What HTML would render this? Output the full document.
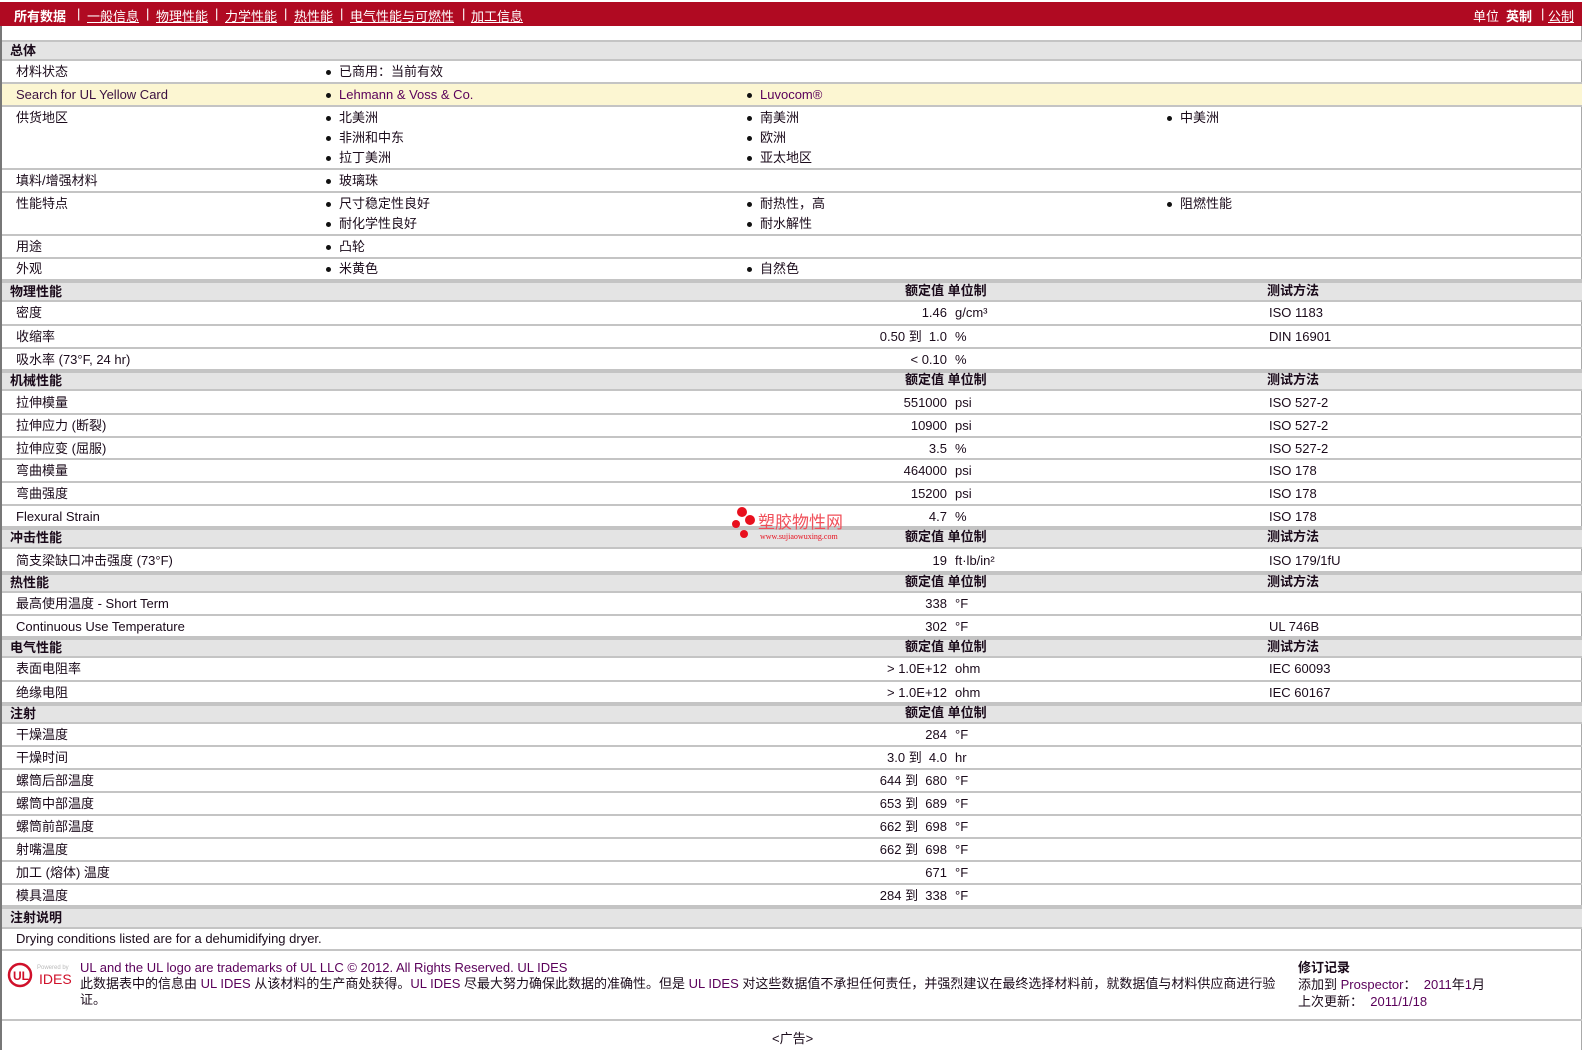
<!DOCTYPE html>
<html><head><meta charset="utf-8"><style>
*{margin:0;padding:0;box-sizing:border-box}
body{width:1586px;height:1050px;background:#fff;font-family:"Liberation Sans","Noto Sans CJK SC",sans-serif;font-size:13px;color:#1a0a1a;position:relative;overflow:hidden}
.bar{position:absolute;left:0;top:2px;width:1582px;height:24px;background:#b00a22;color:#fff;font-size:13px}
.bar span{position:absolute;top:4px}
.bar u{text-decoration:underline}
.frame{position:absolute;left:0;top:26px;width:1582px;height:1024px;border-left:2px solid #777;border-right:1px solid #aaa}
.r{position:absolute;left:2px;width:1580px;border-bottom:2px solid #c4c4c4}
.s{background:#e4e4e4;font-weight:bold;border-top:2px solid #c4c4c4}
.y{background:#fcf6d2}
.c{position:absolute;white-space:nowrap;line-height:20px}
.b::before{content:"";position:absolute;left:-13px;top:8px;width:5px;height:5px;border-radius:50%;background:#111}
.v{position:absolute;right:635px;text-align:right;white-space:nowrap;line-height:20px}
.pu{color:#5a005a}
</style></head><body>
<div class="bar">
<span style="left:14px;font-weight:bold">所有数据</span>
<span style="left:77px">|</span><span style="left:87px"><u>一般信息</u></span>
<span style="left:146px">|</span><span style="left:156px"><u>物理性能</u></span>
<span style="left:215px">|</span><span style="left:225px"><u>力学性能</u></span>
<span style="left:284px">|</span><span style="left:294px"><u>热性能</u></span>
<span style="left:340px">|</span><span style="left:350px"><u>电气性能与可燃性</u></span>
<span style="left:462px">|</span><span style="left:471px"><u>加工信息</u></span>
<span style="left:1473px">单位</span><span style="left:1506px;font-weight:bold">英制</span><span style="left:1541px">|</span><span style="left:1548px"><u>公制</u></span>
</div>
<div class="frame"></div>

<div class="r s" style="top:40px;height:21px"><div class="c" style="left:8px;top:-1px">总体</div></div>
<div class="r" style="top:61px;height:23px"><div class="c" style="left:14px;top:1px">材料状态</div><div class="c b" style="left:337px;top:1px">已商用：当前有效</div></div>
<div class="r y" style="top:84px;height:23px"><div class="c" style="left:14px;top:1px;color:#3a1040">Search for UL Yellow Card</div><div class="c b pu" style="left:337px;top:1px">Lehmann &amp; Voss &amp; Co.</div><div class="c b pu" style="left:758px;top:1px">Luvocom®</div></div>
<div class="r" style="top:107px;height:63px"><div class="c" style="left:14px;top:1px">供货地区</div>
<div class="c b" style="left:337px;top:1px">北美洲</div><div class="c b" style="left:337px;top:21px">非洲和中东</div><div class="c b" style="left:337px;top:41px">拉丁美洲</div>
<div class="c b" style="left:758px;top:1px">南美洲</div><div class="c b" style="left:758px;top:21px">欧洲</div><div class="c b" style="left:758px;top:41px">亚太地区</div>
<div class="c b" style="left:1178px;top:1px">中美洲</div></div>
<div class="r" style="top:170px;height:23px"><div class="c" style="left:14px;top:1px">填料/增强材料</div><div class="c b" style="left:337px;top:1px">玻璃珠</div></div>
<div class="r" style="top:193px;height:43px"><div class="c" style="left:14px;top:1px">性能特点</div>
<div class="c b" style="left:337px;top:1px">尺寸稳定性良好</div><div class="c b" style="left:337px;top:21px">耐化学性良好</div>
<div class="c b" style="left:758px;top:1px">耐热性，高</div><div class="c b" style="left:758px;top:21px">耐水解性</div>
<div class="c b" style="left:1178px;top:1px">阻燃性能</div></div>
<div class="r" style="top:236px;height:23px"><div class="c" style="left:14px;top:1px">用途</div><div class="c b" style="left:337px;top:1px">凸轮</div></div>
<div class="r" style="top:259px;height:22px"><div class="c" style="left:14px;top:0px">外观</div><div class="c b" style="left:337px;top:0px">米黄色</div><div class="c b" style="left:758px;top:0px">自然色</div></div>

<div class="r s" style="top:281px;height:21px"><div class="c" style="left:903px;top:-2px">额定值 单位制</div><div class="c" style="left:8px;top:-1px">物理性能</div><div class="c" style="left:1265px;top:-2px">测试方法</div></div>
<div class="r" style="top:302px;height:24px"><div class="c" style="left:14px;top:1px">密度</div><div class="v" style="top:1px">1.46</div><div class="c" style="left:953px;top:1px">g/cm³</div><div class="c" style="left:1267px;top:1px">ISO 1183</div></div>
<div class="r" style="top:326px;height:23px"><div class="c" style="left:14px;top:1px">收缩率</div><div class="v" style="top:1px">0.50 到&nbsp; 1.0</div><div class="c" style="left:953px;top:1px">%</div><div class="c" style="left:1267px;top:1px">DIN 16901</div></div>
<div class="r" style="top:349px;height:22px"><div class="c" style="left:14px;top:1px">吸水率 (73°F, 24 hr)</div><div class="v" style="top:1px">&lt; 0.10</div><div class="c" style="left:953px;top:1px">%</div></div>

<div class="r s" style="top:371px;height:20px"><div class="c" style="left:8px;top:-2px">机械性能</div><div class="c" style="left:903px;top:-3px">额定值 单位制</div><div class="c" style="left:1265px;top:-3px">测试方法</div></div>
<div class="r" style="top:391px;height:24px"><div class="c" style="left:14px;top:2px">拉伸模量</div><div class="v" style="top:2px">551000</div><div class="c" style="left:953px;top:2px">psi</div><div class="c" style="left:1267px;top:2px">ISO 527-2</div></div>
<div class="r" style="top:415px;height:23px"><div class="c" style="left:14px;top:1px">拉伸应力 (断裂)</div><div class="v" style="top:1px">10900</div><div class="c" style="left:953px;top:1px">psi</div><div class="c" style="left:1267px;top:1px">ISO 527-2</div></div>
<div class="r" style="top:438px;height:22px"><div class="c" style="left:14px;top:1px">拉伸应变 (屈服)</div><div class="v" style="top:1px">3.5</div><div class="c" style="left:953px;top:1px">%</div><div class="c" style="left:1267px;top:1px">ISO 527-2</div></div>
<div class="r" style="top:460px;height:23px"><div class="c" style="left:14px;top:1px">弯曲模量</div><div class="v" style="top:1px">464000</div><div class="c" style="left:953px;top:1px">psi</div><div class="c" style="left:1267px;top:1px">ISO 178</div></div>
<div class="r" style="top:483px;height:23px"><div class="c" style="left:14px;top:1px">弯曲强度</div><div class="v" style="top:1px">15200</div><div class="c" style="left:953px;top:1px">psi</div><div class="c" style="left:1267px;top:1px">ISO 178</div></div>
<div class="r" style="top:506px;height:22px"><div class="c" style="left:14px;top:1px">Flexural Strain</div><div class="v" style="top:1px">4.7</div><div class="c" style="left:953px;top:1px">%</div><div class="c" style="left:1267px;top:1px">ISO 178</div></div>

<div class="r s" style="top:528px;height:21px"><div class="c" style="left:8px;top:-2px">冲击性能</div><div class="c" style="left:903px;top:-3px">额定值 单位制</div><div class="c" style="left:1265px;top:-3px">测试方法</div></div>
<div class="r" style="top:549px;height:24px"><div class="c" style="left:14px;top:2px">简支梁缺口冲击强度 (73°F)</div><div class="v" style="top:2px">19</div><div class="c" style="left:953px;top:2px">ft·lb/in²</div><div class="c" style="left:1267px;top:2px">ISO 179/1fU</div></div>

<div class="r s" style="top:573px;height:20px"><div class="c" style="left:8px;top:-2px">热性能</div><div class="c" style="left:903px;top:-3px">额定值 单位制</div><div class="c" style="left:1265px;top:-3px">测试方法</div></div>
<div class="r" style="top:593px;height:23px"><div class="c" style="left:14px;top:1px">最高使用温度 - Short Term</div><div class="v" style="top:1px">338</div><div class="c" style="left:953px;top:1px">°F</div></div>
<div class="r" style="top:616px;height:22px"><div class="c" style="left:14px;top:1px">Continuous Use Temperature</div><div class="v" style="top:1px">302</div><div class="c" style="left:953px;top:1px">°F</div><div class="c" style="left:1267px;top:1px">UL 746B</div></div>

<div class="r s" style="top:638px;height:20px"><div class="c" style="left:8px;top:-2px">电气性能</div><div class="c" style="left:903px;top:-3px">额定值 单位制</div><div class="c" style="left:1265px;top:-3px">测试方法</div></div>
<div class="r" style="top:658px;height:24px"><div class="c" style="left:14px;top:1px">表面电阻率</div><div class="v" style="top:1px">&gt; 1.0E+12</div><div class="c" style="left:953px;top:1px">ohm</div><div class="c" style="left:1267px;top:1px">IEC 60093</div></div>
<div class="r" style="top:682px;height:22px"><div class="c" style="left:14px;top:1px">绝缘电阻</div><div class="v" style="top:1px">&gt; 1.0E+12</div><div class="c" style="left:953px;top:1px">ohm</div><div class="c" style="left:1267px;top:1px">IEC 60167</div></div>

<div class="r s" style="top:704px;height:20px"><div class="c" style="left:8px;top:-2px">注射</div><div class="c" style="left:903px;top:-3px">额定值 单位制</div></div>
<div class="r" style="top:724px;height:23px"><div class="c" style="left:14px;top:1px">干燥温度</div><div class="v" style="top:1px">284</div><div class="c" style="left:953px;top:1px">°F</div></div>
<div class="r" style="top:747px;height:23px"><div class="c" style="left:14px;top:1px">干燥时间</div><div class="v" style="top:1px">3.0 到&nbsp; 4.0</div><div class="c" style="left:953px;top:1px">hr</div></div>
<div class="r" style="top:770px;height:23px"><div class="c" style="left:14px;top:1px">螺筒后部温度</div><div class="v" style="top:1px">644 到&nbsp; 680</div><div class="c" style="left:953px;top:1px">°F</div></div>
<div class="r" style="top:793px;height:23px"><div class="c" style="left:14px;top:1px">螺筒中部温度</div><div class="v" style="top:1px">653 到&nbsp; 689</div><div class="c" style="left:953px;top:1px">°F</div></div>
<div class="r" style="top:816px;height:23px"><div class="c" style="left:14px;top:1px">螺筒前部温度</div><div class="v" style="top:1px">662 到&nbsp; 698</div><div class="c" style="left:953px;top:1px">°F</div></div>
<div class="r" style="top:839px;height:23px"><div class="c" style="left:14px;top:1px">射嘴温度</div><div class="v" style="top:1px">662 到&nbsp; 698</div><div class="c" style="left:953px;top:1px">°F</div></div>
<div class="r" style="top:862px;height:23px"><div class="c" style="left:14px;top:1px">加工 (熔体) 温度</div><div class="v" style="top:1px">671</div><div class="c" style="left:953px;top:1px">°F</div></div>
<div class="r" style="top:885px;height:22px"><div class="c" style="left:14px;top:1px">模具温度</div><div class="v" style="top:1px">284 到&nbsp; 338</div><div class="c" style="left:953px;top:1px">°F</div></div>

<div class="r s" style="top:907px;height:22px"><div class="c" style="left:8px;top:-1px">注射说明</div></div>
<div class="r" style="top:929px;height:22px"><div class="c" style="left:14px;top:0px">Drying conditions listed are for a dehumidifying dryer.</div></div>

<div class="r" style="top:951px;height:70px">
<svg style="position:absolute;left:4px;top:10px" width="68" height="30">
<circle cx="14" cy="14" r="11" fill="none" stroke="#d0102a" stroke-width="2.5"/>
<text x="7" y="19" font-family="Liberation Sans" font-weight="bold" font-size="12" fill="#d0102a">UL</text>
<text x="31" y="8" font-family="Liberation Sans" font-size="6" fill="#bbb">Powered by</text>
<text x="33" y="23" font-family="Liberation Sans" font-size="14" fill="#d0102a">IDES</text>
</svg>
<div class="c" style="left:78px;top:9px;line-height:16px"><span class="pu">UL and the UL logo are trademarks of UL LLC © 2012. All Rights Reserved. UL IDES</span><br>此数据表中的信息由 <span class="pu">UL IDES</span> 从该材料的生产商处获得。<span class="pu">UL IDES</span> 尽最大努力确保此数据的准确性。但是 <span class="pu">UL IDES</span> 对这些数据值不承担任何责任，并强烈建议在最终选择材料前，就数据值与材料供应商进行验<br>证。</div>
<div class="c" style="left:1296px;top:8px;line-height:17px"><b>修订记录</b><br>添加到 <span class="pu">Prospector</span>：&nbsp; <span class="pu">2011</span>年<span class="pu">1</span>月<br>上次更新：&nbsp; <span class="pu">2011/1/18</span></div>
</div>
<div class="c" style="left:772px;top:1029px">&lt;广告&gt;</div>

<svg style="position:absolute;left:728px;top:506px" width="140" height="36">
<circle cx="14" cy="6" r="5" fill="#e8101e"/><circle cx="22" cy="14" r="5" fill="#e8101e"/><circle cx="8" cy="18" r="4" fill="#e8101e"/><circle cx="16" cy="28" r="4" fill="#e8101e"/>
<text x="30" y="22" font-family="Noto Sans CJK SC" font-size="17" fill="#f0505a">塑胶物性网</text>
<text x="32" y="33" font-family="Liberation Serif" font-size="8" fill="#e8101e">www.sujiaowuxing.com</text>
</svg>
</body></html>
